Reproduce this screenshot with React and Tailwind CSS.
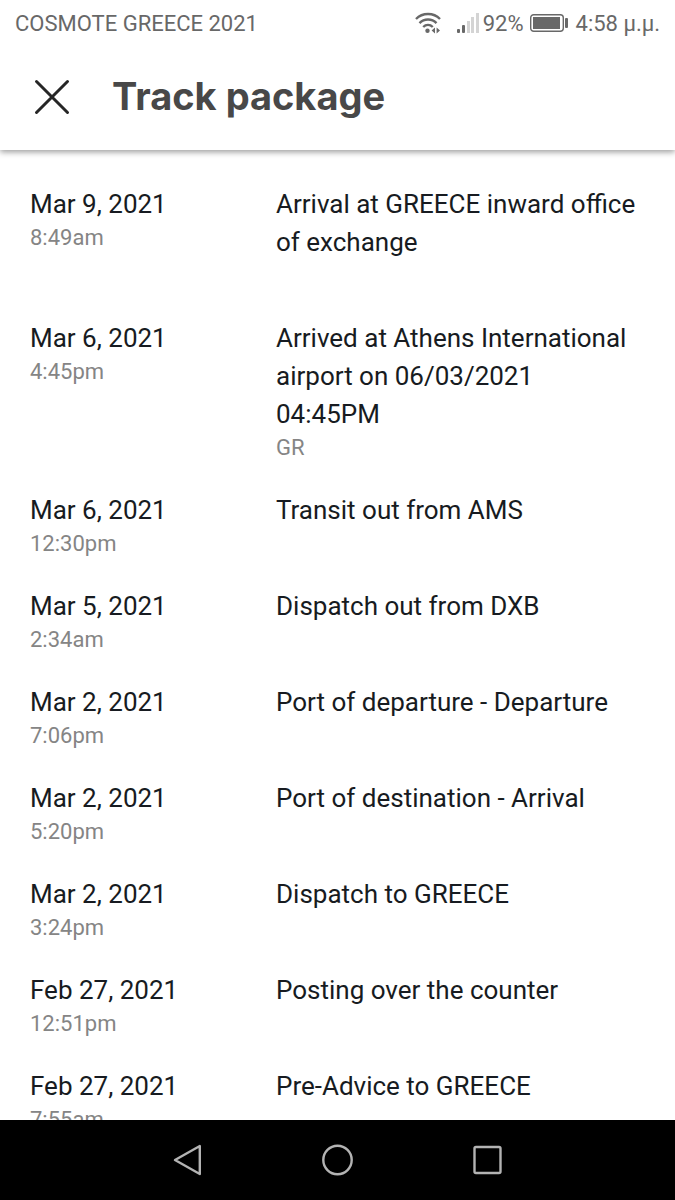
const events = [
  { date: "Mar 9, 2021", time: "8:49am", title: "Arrival at GREECE inward office of exchange" },
  {
    date: "Mar 6, 2021",
    time: "4:45pm",
    title: "Arrived at Athens International airport on 06/03/2021 04:45PM",
    location: "GR",
  },
  { date: "Mar 6, 2021", time: "12:30pm", title: "Transit out from AMS" },
  { date: "Mar 5, 2021", time: "2:34am", title: "Dispatch out from DXB" },
  { date: "Mar 2, 2021", time: "7:06pm", title: "Port of departure - Departure" },
  { date: "Mar 2, 2021", time: "5:20pm", title: "Port of destination - Arrival" },
  { date: "Mar 2, 2021", time: "3:24pm", title: "Dispatch to GREECE" },
  { date: "Feb 27, 2021", time: "12:51pm", title: "Posting over the counter" },
  { date: "Feb 27, 2021", time: "7:55am", title: "Pre-Advice to GREECE" },
];

const WifiIcon = () => (
  <svg width="26" height="24" viewBox="0 0 26 24" fill="none" stroke="#686868" strokeWidth="2.4" aria-hidden="true">
    <path d="M1 7C7.5 0.4 18.5 0.4 25 7" />
    <path d="M4.5 11.2C9.2 6.3 16.8 6.3 21.5 11.2" />
    <path d="M8.2 15C11 12.2 15 12.2 17.8 15" />
    <circle cx="12.5" cy="18.8" r="2.2" fill="#686868" stroke="none" />
    <path d="M20 15.5v6l-3.4-3zM21.6 15.5v6l3.4-3z" fill="#686868" stroke="none" />
  </svg>
);

const SignalIcon = () => (
  <svg width="22" height="24" viewBox="0 0 22 24" aria-hidden="true">
    <rect x="0" y="17" width="3" height="4" rx="1" fill="#686868" />
    <rect x="5" y="13" width="3" height="8" rx="1" fill="#686868" />
    <rect x="10" y="9" width="3" height="12" fill="#d4d4d4" />
    <rect x="14" y="5" width="3" height="16" fill="#d4d4d4" />
    <rect x="19" y="1" width="3" height="20" fill="#d4d4d4" />
  </svg>
);

const BatteryIcon = () => (
  <svg width="38" height="20" viewBox="0 0 38 20" aria-hidden="true">
    <rect x="0.7" y="0.7" width="32.6" height="16.6" rx="3" fill="none" stroke="#686868" strokeWidth="1.4" />
    <rect x="3" y="3" width="27" height="12" fill="#686868" />
    <rect x="35" y="4" width="3" height="10" rx="1" fill="#686868" />
  </svg>
);

const StatusBar = () => (
  <div className="relative z-10 flex h-12 shrink-0 items-center justify-between bg-white px-[15px] text-[22px] leading-7 text-[#686868]">
    <span>COSMOTE GREECE 2021</span>
    <div className="flex items-center">
      <WifiIcon />
      <div className="ml-4 flex items-center gap-1">
        <SignalIcon />
        <span>92%</span>
      </div>
      <div className="ml-1.5 flex items-center gap-2">
        <BatteryIcon />
        <span>4:58 μ.μ.</span>
      </div>
    </div>
  </div>
);

const Header = () => (
  <header className="flex h-[102px] shrink-0 items-center gap-10 px-8 pb-1 shadow-[0_2px_6px_rgba(0,0,0,0.4)]">
    <button type="button" aria-label="Close" className="flex size-10 items-center justify-center">
      <svg width="36" height="36" viewBox="0 0 36 36" fill="none" stroke="#262626" strokeWidth="3" strokeLinecap="round">
        <path d="M2.5 2.5l31 31M33.5 2.5l-31 31" />
      </svg>
    </button>
    <h1 className="pb-0.5 font-['Inter'] text-[38px] leading-12 font-bold text-[#484848]">Track package</h1>
  </header>
);

const TrackingEvent = ({ date, time, title, location }) => (
  <li className="grid grid-cols-[2fr_3fr]">
    <div>
      <p className="text-[26px] leading-[38px] text-[#171b21]">{date}</p>
      <p className="text-[22px] leading-[30px] text-[#858585]">{time}</p>
    </div>
    <div className="pr-2">
      <p className="text-[26px] leading-[38px] text-[#171b21]">{title}</p>
      <p className="min-h-[30px] text-[22px] leading-[30px] text-[#858585]">{location}</p>
    </div>
  </li>
);

const NavigationBar = () => (
  <nav className="flex h-20 shrink-0 items-center justify-center bg-black">
    <button type="button" aria-label="Back" className="flex h-full w-[150px] items-center justify-center">
      <svg width="32" height="32" viewBox="0 0 32 32" fill="none" stroke="#b3b3b3" strokeWidth="2.4" strokeLinejoin="round">
        <path d="M27.8 2v28L3 16z" />
      </svg>
    </button>
    <button type="button" aria-label="Home" className="flex h-full w-[150px] items-center justify-center">
      <svg width="32" height="32" viewBox="0 0 32 32" fill="none" stroke="#b3b3b3" strokeWidth="2.4">
        <circle cx="15.5" cy="16" r="14.2" />
      </svg>
    </button>
    <button type="button" aria-label="Recent apps" className="flex h-full w-[150px] items-center justify-center">
      <svg width="32" height="32" viewBox="0 0 32 32" fill="none" stroke="#b3b3b3" strokeWidth="2.4">
        <rect x="2.5" y="3" width="26" height="26" rx="1.5" />
      </svg>
    </button>
  </nav>
);

const App = () => {
  return (
    <div className="flex h-screen flex-col bg-white font-['Roboto',sans-serif]">
      <StatusBar />
      <Header />
      <main className="min-h-0 flex-1 overflow-hidden">
        <ul className="flex flex-col gap-7 px-[30px] pt-[35px]">
          {events.map((event) => (
            <TrackingEvent key={`${event.date}-${event.time}`} {...event} />
          ))}
        </ul>
      </main>
      <NavigationBar />
    </div>
  );
};

export default App;
